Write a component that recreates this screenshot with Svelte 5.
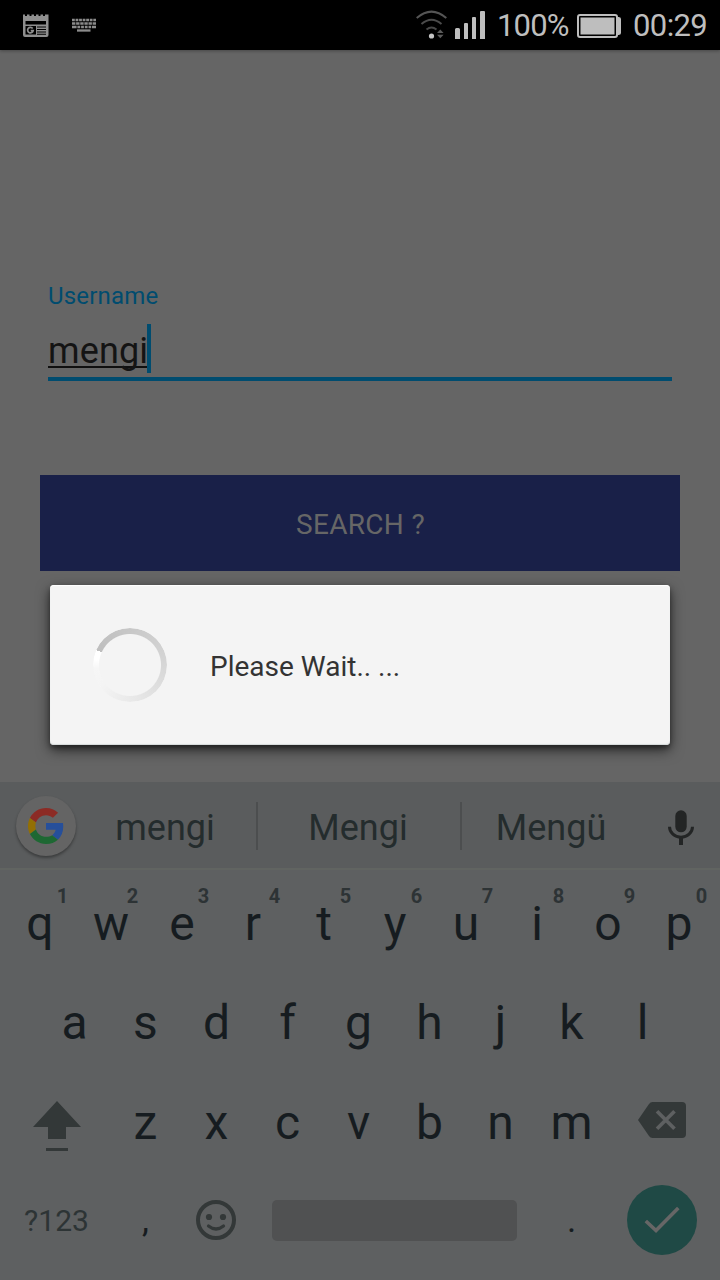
<script>
  const numberRow = 'qwertyuiop'.split('').map((k, i) => ({ k, n: (i + 1) % 10 }));
  const homeRow = 'asdfghjkl'.split('');
  const lowerRow = 'zxcvbnm'.split('');
</script>

<div class="screen">
  <header class="status">
    <svg class="news" width="26" height="24" viewBox="0 0 26 24">
      <path fill="#8f8f8f" fill-rule="evenodd" d="M0 .5h2v1.500h2V.5h2.500v1.500h2V.5H11V2h2V.5h2.500V2h2V.5H20V2h2V.5h3.500V21a2 2 0 0 1-2 2H2a2 2 0 0 1-2-2zM2.500 7v3.500h20.500V7zM2.500 12v8.500H13V12zM14 12.600v1h9v-1zM14 15v1h9v-1zM14 17.400v1h9v-1zM14 19.800v1h9v-1z" />
      <path fill="none" stroke="#8f8f8f" stroke-width="1.700" d="M9.700 14.500A2.800 2.800 0 1 0 10.200 16.600H7.700" />
    </svg>
    <svg class="kbd" width="24" height="14" viewBox="0 0 24 14">
      <g fill="none" stroke="#8b8b8b" stroke-width="2.300">
        <path d="M0 2h24" stroke-dasharray="2.800 .75" />
        <path d="M0 5.500h24" stroke-dasharray="3.400 .72" />
        <path d="M0 9h4.600M5.400 9h2.800M9.100 9h2.800M12.800 9h2.800M16.500 9h2.700M20 9H24" />
        <path d="M5 12.500h13.500" />
      </g>
    </svg>
    <div class="right">
      <svg class="wifi" width="32" height="30" viewBox="0 0 32 30">
        <g fill="none" stroke="#555" stroke-width="2">
          <path d="M.7 8Q15.500-4.800 30.300 8" />
          <path d="M5.500 14Q15.500 5.500 25.500 14" stroke="#4c4c4c" />
          <path d="M10.500 19.500Q15.500 15.500 20.500 19.500" stroke="#484848" />
        </g>
        <circle cx="15.500" cy="26" r="2.600" fill="#c4c4c4" />
        <path fill="#5b5b5b" d="M21 23l3.300-3.500 3.300 3.500zM21 24.800h6.600L24.300 28.300z" />
      </svg>
      <svg class="signal" width="30" height="28" viewBox="0 0 30 28">
        <path fill="#bebebe" d="M0 18.500q0-1.500 1.500-1.500h2Q5 17 5 18.500V28H0zM9 13q0-1 1-1h2q1 0 1 1v15H9zM17 7q0-1 1-1h2q1 0 1 1v21h-4zM25 1q0-1 1-1h3q1 0 1 1v27h-5z" />
      </svg>
      <span class="percent">100%</span>
      <svg class="battery" width="44" height="24" viewBox="0 0 44 24">
        <rect x="1" y="1" width="39" height="22" rx="2" fill="none" stroke="#bebebe" stroke-width="2" />
        <path fill="#bebebe" d="M3.500 3.500h34v17h-34zM40 3h1.500q2.500 0 2.500 2v14q0 2-2.500 2H40z" />
      </svg>
      <span class="clock">00:29</span>
    </div>
  </header>

  <main class="form">
    <div class="label">Username</div>
    <div class="field"><span class="value">mengi</span><i class="caret"></i></div>
    <div class="search">SEARCH ?</div>
  </main>

  <section class="keyboard">
    <div class="suggestions">
      <div class="logo">
        <svg width="36" height="36" viewBox="0 0 48 48">
          <path fill="#8c2b25" d="M24 9.500c3.540 0 6.710 1.220 9.210 3.600l6.850-6.850C35.900 2.380 30.470 0 24 0 14.620 0 6.510 5.380 2.560 13.220l7.980 6.190C12.430 13.720 17.740 9.500 24 9.500z" />
          <path fill="#264f9a" d="M46.980 24.550c0-1.570-.15-3.090-.38-4.550H24v9.020h12.940c-.58 2.960-2.260 5.480-4.780 7.180l7.730 6c4.510-4.180 7.090-10.360 7.090-17.650z" />
          <path fill="#936f04" d="M10.530 28.590c-.48-1.450-.76-2.990-.76-4.590s.27-3.140.76-4.590l-7.980-6.190C.92 16.460 0 20.120 0 24c0 3.880.92 7.540 2.560 10.780l7.970-6.190z" />
          <path fill="#1e6833" d="M24 48c6.480 0 11.930-2.130 15.890-5.810l-7.730-6c-2.150 1.450-4.920 2.300-8.160 2.300-6.260 0-11.570-4.220-13.470-9.910l-7.980 6.190C6.510 42.620 14.620 48 24 48z" />
        </svg>
      </div>
      <span class="word">mengi</span><i class="bar"></i>
      <span class="word">Mengi</span><i class="bar"></i>
      <span class="word">Mengü</span>
      <svg class="mic" width="26" height="36" viewBox="0 0 26 36">
        <rect x="7.300" y=".3" width="11.400" height="22" rx="5.700" fill="#232525" />
        <path d="M1.500 16.700a11.500 10.500 0 0 0 23 0" fill="none" stroke="#232525" stroke-width="3" />
        <path d="M13 27v8" stroke="#232525" stroke-width="4" />
      </svg>
    </div>

    <div class="row first">
      {#each numberRow as key}
        <div class="key">{key.k}<sup>{key.n}</sup></div>
      {/each}
    </div>
    <div class="row home">
      {#each homeRow as key}
        <div class="key">{key}</div>
      {/each}
    </div>
    <div class="row lower">
      <div class="wide">
        <svg class="shift" width="48" height="50" viewBox="0 0 48 50" fill="#333838">
          <path d="M24 0l24 26H33v12H15V26H0zM13 47h22v3H13z" />
        </svg>
      </div>
      {#each lowerRow as key}
        <div class="key">{key}</div>
      {/each}
      <div class="wide">
        <svg class="back" width="48" height="36" viewBox="0 0 48 36">
          <path fill="#333838" d="M14.500 0H44q4 0 4 4v28q0 4-4 4H14.500q-2.200 0-3.500-2L0 18 11 2q1.300-2 3.500-2z" />
          <path d="M19 9.300l17.500 17.400M36.500 9.300L19 26.700" fill="none" stroke="#5e6061" stroke-width="3.700" />
        </svg>
      </div>
    </div>
    <div class="row bottom">
      <div class="wide symbols">?123</div>
      <div class="key small">,</div>
      <div class="key">
        <svg class="emoji" width="40" height="40" viewBox="0 0 40 40">
          <circle cx="20" cy="20" r="18" fill="none" stroke="#333838" stroke-width="4" />
          <circle cx="13" cy="17" r="3.100" fill="#333838" />
          <circle cx="27" cy="17" r="3.100" fill="#333838" />
          <path d="M12.500 26q7.500 6 15 0" fill="none" stroke="#333838" stroke-width="3.200" stroke-linecap="round" />
        </svg>
      </div>
      <div class="space"></div>
      <div class="key small">.</div>
      <div class="wide">
        <div class="done">
          <svg width="36" height="28" viewBox="0 0 36 28">
            <path d="M1.800 15L12 24.500 34.300 2" fill="none" stroke="#666" stroke-width="3.600" />
          </svg>
        </div>
      </div>
    </div>
  </section>

  <div class="dialog">
    <div class="spinner"></div>
    <span>Please Wait.. ...</span>
  </div>
</div>

<style>
  :global(body) { background: #666; }
  .screen {
    position: relative;
    width: 720px;
    height: 1280px;
    overflow: hidden;
    display: flex;
    flex-direction: column;
    background: #656565;
    font-family: Roboto, sans-serif;
  }
  svg { display: block; flex: none; }
  .status {
    height: 50px;
    flex: none;
    box-sizing: border-box;
    padding: 0 12px 0 23px;
    display: flex;
    align-items: center;
    background: #000;
    box-shadow: 0 1px 3px rgba(0, 0, 0, .3);
  }
  .news { margin-top: 1px; }
  .kbd { margin-left: 23px; }
  .right { margin-left: auto; display: flex; align-items: center; color: #bebebe; font-size: 31px; line-height: 48px; }
  .wifi { margin-right: 7px; margin-top: -1px; }
  .percent { width: 72px; margin: 2px 0 0 12px; letter-spacing: -.8px; white-space: nowrap; }
  .battery { margin: 2px 12px 0 8px; }
  .clock { width: 75px; margin-top: 2px; letter-spacing: -.6px; white-space: nowrap; }

  .form { flex: 1; padding: 232px 40px 0; }
  .label { margin: 0 8px; height: 28px; line-height: 28px; font-size: 24px; color: #004c6f; letter-spacing: .2px; }
  .field {
    height: 57px;
    margin: 14px 8px 0;
    box-sizing: border-box;
    display: flex;
    align-items: flex-start;
    border-bottom: 4px solid #004c6f;
  }
  .value { width: 100px; height: 42px; line-height: 55px; font-size: 36px; letter-spacing: .15px; color: #141414; border-bottom: 2px solid #101010; }
  .caret { width: 4px; height: 49px; background: #004c6f; margin-left: -1px; }
  .search {
    margin-top: 94px;
    height: 96px;
    line-height: 100px;
    text-align: center;
    text-indent: 1px;
    font-size: 28px;
    letter-spacing: .3px;
    color: #666;
    background: #192048;
  }

  .keyboard { height: 498px; flex: none; background: #5e6061; color: #161c20; }
  .suggestions {
    height: 88px;
    box-sizing: border-box;
    display: grid;
    grid-template-columns: 76px 180px 2px 202px 2px 180px 78px;
    align-items: center;
    justify-items: center;
    background: #5a5c5d;
    border-bottom: 2px solid #616461;
  }
  .logo {
    justify-self: end;
    width: 60px;
    height: 60px;
    margin-top: 2px;
    border-radius: 50%;
    display: flex;
    align-items: center;
    justify-content: center;
    background: #646464;
    box-shadow: 0 2px 3px rgba(0, 0, 0, .35);
  }
  .word { font-size: 36px; line-height: 44px; margin: 5px 2px 0 0; color: #242c2d; }
  .bar { width: 2px; height: 48px; margin-top: 2px; background: #4c4e4f; }
  .mic { margin-top: 5px; }

  .row { display: flex; height: 99px; padding: 0 5px; }
  .first { padding: 4px 4.500px 0; }
  .home { height: 98px; padding: 0 39px; }
  .lower { height: 100px; }
  .key {
    position: relative;
    width: 71px;
    flex: none;
    display: flex;
    align-items: center;
    justify-content: center;
    font-size: 48px;
  }
  .key sup { position: absolute; top: 10px; right: 8px; width: 12px; text-align: center; font-size: 20px; line-height: 24px; font-weight: 700; color: #2d3335; }
  .first .key:first-child sup, .first .key:last-child sup { right: 7px; }
  .wide { width: 105px; flex: none; display: flex; align-items: center; justify-content: center; }
  .lower .wide:last-child, .bottom .wide:last-child { width: 110px; }
  .shift { margin: 9px 2px 0 0; }
  .lower .key { padding-top: 3px; box-sizing: border-box; }
  .back { margin-top: -2px; }
  .bottom { height: 98px; }
  .symbols { font-size: 30px; color: #2d3435; text-indent: -2px; }
  .small { font-size: 35px; }
  .emoji { margin-right: 2px; }
  .space { flex: none; width: 245px; height: 41px; margin: auto 19px auto 20px; border-radius: 5px; background: #505152; }
  .done { width: 70px; height: 70px; border-radius: 50%; background: #1f4945; display: flex; align-items: center; justify-content: center; }

  .dialog {
    position: absolute;
    left: 50px;
    top: 585px;
    width: 620px;
    height: 160px;
    box-sizing: border-box;
    padding-left: 43px;
    display: flex;
    align-items: center;
    gap: 43px;
    border-radius: 4px;
    background: #f4f4f4;
    box-shadow: 0 5px 14px rgba(0, 0, 0, .6), 0 3px 5px rgba(0, 0, 0, .35), inset 0 1px 1px #fff, inset 0 -1px 1px #d5dada;
    color: #333;
    font-size: 28px;
  }
  .dialog span { margin-top: 3px; }
  .spinner {
    width: 74px;
    height: 74px;
    border-radius: 50%;
    background: conic-gradient(from 294deg, #bebebe 0deg, #c8c8c8 70deg, #d4d4d4 145deg, #e6e6e6 230deg, #f4f4f4 300deg, #f6f6f6 330deg, #fff 345deg, #fff 360deg);
    -webkit-mask: radial-gradient(circle, transparent 30.500px, #000 31.500px);
    mask: radial-gradient(circle, transparent 30.500px, #000 31.500px);
  }
</style>
